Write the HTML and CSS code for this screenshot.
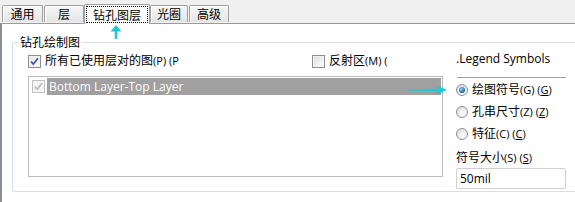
FILE: index.html
```html
<!DOCTYPE html>
<html>
<head>
<meta charset="utf-8">
<link rel="stylesheet" href="styles.css">
</head>
<body>
<div class="window">
  <div class="tabs">
    <div class="tab t1">通用</div>
    <div class="tab t2">层</div>
    <div class="tab active"><span class="focus">钻孔图层</span></div>
    <div class="tab t4">光圈</div>
    <div class="tab t5">高级</div>
  </div>
  <div class="panel">
    <fieldset class="group">
      <legend class="legend">钻孔绘制图</legend>
      <div class="content">
        <div class="left">
          <div class="checkrow">
            <div class="check first"><span class="box checked"><svg viewBox="0 0 11 11" width="11" height="11"><path d="M2 5.5 L4.3 8.2 L9 2.2" fill="none" stroke="#3c5aa8" stroke-width="1.8"/></svg></span><span class="lbl">所有已使用层对的图<span class="lat">(P) (P</span></span></div>
            <div class="check second"><span class="box"></span><span class="lbl clip">反射区<span class="lat">(M) (</span></span></div>
          </div>
          <div class="listbox">
            <div class="item">
              <span class="box disabled"><svg viewBox="0 0 11 11" width="11" height="11"><path d="M2 5.5 L4.3 8.2 L9 2.2" fill="none" stroke="#bdbdbd" stroke-width="1.8"/></svg></span>
              <span class="sel">Bottom Layer-Top Layer</span>
            </div>
          </div>
        </div>
        <div class="right">
          <div class="rtitle">.Legend Symbols</div>
          <div class="rule"></div>
          <div class="radio"><span class="dot on"></span><span class="lbl">绘图符号<span class="lat">(G) (<u>G</u>)</span></span></div>
          <div class="radio"><span class="dot"></span><span class="lbl">孔串尺寸<span class="lat">(Z) (<u>Z</u>)</span></span></div>
          <div class="radio"><span class="dot"></span><span class="lbl">特征<span class="lat">(C) (<u>C</u>)</span></span></div>
          <div class="sizelbl">符号大小<span class="lat">(S) (<u>S</u>)</span></div>
          <div class="input">50mil</div>
        </div>
      </div>
    </fieldset>
  </div>
  <svg class="arrow-up" width="12" height="15" viewBox="0 0 12 15"><path d="M6 0 L11.5 6.5 L7.3 6.5 L7.3 14 L4.7 14 L4.7 6.5 L0.5 6.5 Z" fill="#1fcad6"/></svg>
  <svg class="arrow-right" width="41" height="10" viewBox="0 0 41 10"><path d="M0 4.6 L30 3.8 L30 0.5 L40 5 L30 9.5 L30 6.2 L0 5.4 Z" fill="#1fcad6"/></svg>
</div>
</body>
</html>
```
FILE: styles.css
```css
* { box-sizing: border-box; }
html, body { margin: 0; padding: 0; }
body {
  width: 575px;
  height: 202px;
  overflow: hidden;
  background: #f0f0f0;
  font-family: "Open Sans", "Noto Sans CJK SC", sans-serif;
  font-size: 12px;
  color: #000;
}
.window {
  position: relative;
  width: 575px;
  height: 202px;
  display: flex;
  flex-direction: column;
}
.tabs {
  height: 23px;
  display: flex;
  align-items: flex-end;
  padding-left: 2px;
  position: relative;
  z-index: 2;
}
.tab {
  height: 17px;
  margin-bottom: 1px;
  border: 1px solid #a0a0a0;
  border-bottom: none;
  border-radius: 2px 2px 0 0;
  background: linear-gradient(#f7f7f7, #e4e4e4);
  box-shadow: inset 1px 1px 0 #ffffff;
  display: flex;
  align-items: center;
  justify-content: center;
  line-height: 16px;
  font-family: "Noto Sans CJK SC", sans-serif;
}
.t1 { width: 41px; }
.t2 { width: 40px; margin-left: 1px; }
.t4 { width: 38px; }
.t5 { width: 40px; margin-left: 1px; }
.tab.active {
  width: 66px;
  height: 20px;
  margin-bottom: -1px;
  background: #fff;
  box-shadow: none;
  border-color: #a0a0a0;
  padding: 1px;
}
.focus {
  display: flex;
  align-items: center;
  justify-content: center;
  width: 100%;
  height: 100%;
  border: 1px dotted #000;
}
.panel {
  flex: 1;
  background: #fff;
  border-top: 1px solid #9a9a9a;
  border-left: 2px solid #8a8e97;
  display: flex;
  flex-direction: column;
}
.group {
  margin: 10px 0 0 10px;
  padding: 0;
  height: 158px;
  border: 1px solid #d5dfe5;
  border-right: none;
  border-radius: 3px 0 0 3px;
  min-width: 0;
}
.legend {
  margin-left: 5px;
  padding: 0 2px;
  line-height: 16px;
  font-family: "Noto Sans CJK SC", sans-serif;
}
.content {
  display: flex;
  align-items: flex-start;
  padding: 2px 0 0 15px;
}
.left {
  width: 415px;
  display: flex;
  flex-direction: column;
}
.checkrow {
  display: flex;
  height: 18px;
  align-items: center;
}
.check {
  display: flex;
  align-items: center;
  white-space: nowrap;
}
.check.first { width: 284px; }
.lbl { line-height: 16px; margin-left: 4px; }
.lat { font-size: 11px; }
.clip { width: 92px; overflow: hidden; }
.box {
  width: 13px;
  height: 13px;
  border: 1px solid #8e8f8f;
  background: linear-gradient(135deg, #dcdcdc, #ffffff);
  box-shadow: inset 0 0 0 1px #f4f4f4;
  display: flex;
  align-items: center;
  justify-content: center;
  flex: none;
}
.box.checked { background: linear-gradient(135deg, #e6e6e6, #ffffff); }
.box.disabled {
  border-color: #c2c2c2;
  background: #f4f4f4;
  box-shadow: none;
}
.listbox {
  margin-top: 6px;
  height: 101px;
  border: 1px solid #bcbcbc;
  padding: 1px 1px;
}
.item {
  display: flex;
  align-items: center;
  height: 17px;
}
.item .box { margin-left: 2px; }
.sel {
  flex: 1;
  height: 17px;
  margin-left: 2px;
  background: #a0a0a0;
  color: #fff;
  line-height: 17px;
  padding-left: 2px;
  white-space: nowrap;
}
.right {
  margin-left: 13px;
  width: 110px;
  display: flex;
  flex-direction: column;
}
.rtitle {
  line-height: 16px;
  margin-top: -1px;
}
.rule {
  height: 1px;
  background: #a0a0a0;
  margin: 10px 0 0 1px;
}
.radio {
  display: flex;
  align-items: center;
  height: 22px;
  white-space: nowrap;
}
.rule + .radio { margin-top: 1px; }
.dot {
  width: 12px;
  height: 12px;
  border-radius: 50%;
  border: 1px solid #8e8f8f;
  background: radial-gradient(circle at 65% 70%, #ffffff, #d8d8d8);
  display: flex;
  align-items: center;
  justify-content: center;
  flex: none;
}
.dot.on::after {
  content: "";
  width: 6px;
  height: 6px;
  border-radius: 50%;
  background: radial-gradient(circle at 40% 35%, #8fd0f5, #1d5fa6 70%, #0d3a74);
}
.sizelbl {
  line-height: 16px;
  margin-top: 5px;
  white-space: nowrap;
}
.input {
  margin-top: 2px;
  height: 21px;
  border: 1px solid #d0d0d0;
  border-radius: 2px;
  line-height: 19px;
  padding-left: 3px;
}
.arrow-up {
  position: absolute;
  left: 110px;
  top: 25px;
  z-index: 3;
}
.arrow-right {
  position: absolute;
  left: 407px;
  top: 85px;
  z-index: 3;
}
```
